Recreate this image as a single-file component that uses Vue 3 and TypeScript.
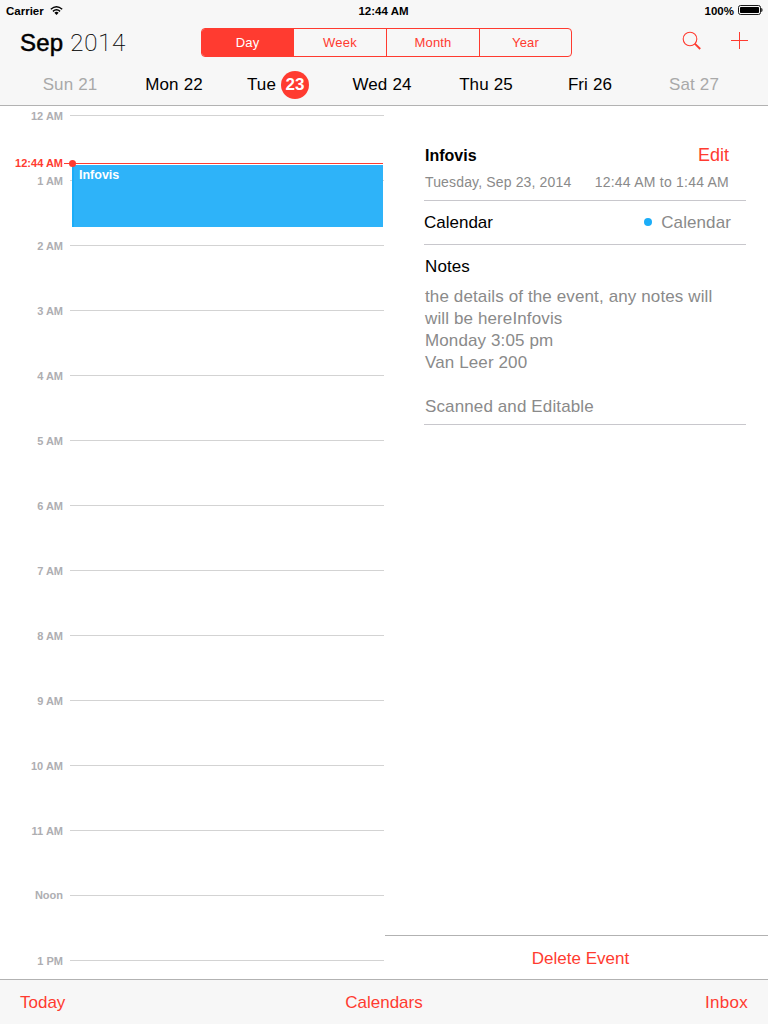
<script setup lang="ts">
interface Day { name: string; date: number; muted?: boolean; current?: boolean }

const days: Day[] = [
  { name: 'Sun', date: 21, muted: true },
  { name: 'Mon', date: 22 },
  { name: 'Tue', date: 23, current: true },
  { name: 'Wed', date: 24 },
  { name: 'Thu', date: 25 },
  { name: 'Fri', date: 26 },
  { name: 'Sat', date: 27, muted: true },
]
const views: string[] = ['Day', 'Week', 'Month', 'Year']
const hours: string[] = [
  '12 AM', '1 AM', '2 AM', '3 AM', '4 AM', '5 AM', '6 AM', '7 AM',
  '8 AM', '9 AM', '10 AM', '11 AM', 'Noon', '1 PM',
]
const notes: string[] = [
  'the details of the event, any notes will',
  'will be hereInfovis',
  'Monday 3:05 pm',
  'Van Leer 200',
  '',
  'Scanned and Editable',
]
</script>

<template>
  <div class="screen">
    <header class="header">
      <div class="status">
        <div class="carrier">
          <span>Carrier</span>
          <svg class="wifi" width="13" height="9" viewBox="0 0 13 9">
            <path d="M0.8 3.3Q6.5 -1.8 12.2 3.3M2.9 5.4Q6.5 2.3 10.1 5.4" fill="none" stroke="#000" stroke-width="1.4" />
            <path d="M4.4 6.7Q6.5 5 8.6 6.7L6.5 9Z" fill="#000" />
          </svg>
        </div>
        <span class="clock">12:44 AM</span>
        <div class="power">
          <span>100%</span>
          <svg class="battery" width="25" height="10" viewBox="0 0 25 10">
            <rect x="0.5" y="0.5" width="22" height="9" rx="2" fill="none" stroke="#000" stroke-width="0.9" />
            <rect x="2" y="2" width="19" height="6" rx="0.8" fill="#000" />
            <path d="M23.6 3.2Q25 5 23.6 6.8Z" fill="#000" stroke="#000" stroke-width="0.5" />
          </svg>
        </div>
      </div>
      <div class="toolbar">
        <h1 class="title"><span class="month">Sep</span><span class="year">2014</span></h1>
        <div class="segments">
          <button v-for="(view, i) in views" :key="view" :class="['segment', { active: i === 0 }]">{{ view }}</button>
        </div>
        <div class="actions">
          <svg width="20" height="20" viewBox="0 0 20 20" fill="none" stroke="#ff3b30">
            <circle cx="8" cy="9" r="6.8" stroke-width="1.1" />
            <path d="M12.8 13.6L18.2 19" stroke-width="1.9" />
          </svg>
          <svg width="18" height="18" viewBox="0 0 18 18" fill="none" stroke="#ff3b30">
            <path d="M0 9.5H17M8.5 1V18" stroke-width="1" />
          </svg>
        </div>
      </div>
      <nav class="days">
        <div v-for="day in days" :key="day.name" :class="['day', { muted: day.muted, current: day.current }]">
          <span>{{ day.name }}</span><span class="date">{{ day.date }}</span>
        </div>
      </nav>
    </header>

    <main class="main">
      <section class="timeline">
        <div v-for="hour in hours" :key="hour" class="hour">
          <span :class="['hour-label', { noon: hour === 'Noon' }]">{{ hour }}</span>
          <span class="hour-line"></span>
        </div>
        <div class="event">Infovis</div>
        <div class="now">
          <span class="now-label">12:44 AM</span>
          <span class="now-line"><span class="now-dot"></span></span>
        </div>
      </section>

      <section class="detail">
        <div class="detail-body">
          <div class="summary">
            <div class="row">
              <h2 class="event-title">Infovis</h2>
              <a class="edit">Edit</a>
            </div>
            <div class="row when">
              <span class="when-date">Tuesday, Sep 23, 2014</span>
              <span class="when-time">12:44 AM to 1:44 AM</span>
            </div>
          </div>
          <div class="calendar-row">
            <span>Calendar</span>
            <span class="calendar-value"><i class="dot"></i>Calendar</span>
          </div>
          <div class="notes">
            <h3 class="notes-title">Notes</h3>
            <p v-for="(line, i) in notes" :key="i" class="note">{{ line }}</p>
          </div>
        </div>
        <div class="delete"><a>Delete Event</a></div>
      </section>
    </main>

    <footer class="footer">
      <a>Today</a>
      <a>Calendars</a>
      <a>Inbox</a>
    </footer>
  </div>
</template>

<style>
body { margin: 0; }
</style>

<style scoped>
.screen {
  width: 768px;
  height: 1024px;
  overflow: hidden;
  display: flex;
  flex-direction: column;
  background: #fff;
  color: #000;
  font-family: "Liberation Sans", Arial, sans-serif;
  font-size: 17px;
}
* { box-sizing: border-box; }
h1, h2, h3, p { margin: 0; font-weight: 400; }
svg { display: block; }

.header {
  height: 106px;
  flex: none;
  display: flex;
  flex-direction: column;
  background: #f7f7f7;
  border-bottom: 1px solid #b2b2b2;
}
.status {
  height: 20px;
  display: grid;
  grid-template-columns: 1fr auto 1fr;
  align-items: center;
  padding: 2px 5px 0 6px;
  font-size: 11.5px;
  font-weight: 700;
  line-height: 18px;
}
.clock { margin-right: 2px; }
.carrier, .power { display: flex; align-items: center; }
.carrier { gap: 6px; }
.wifi, .battery { margin-top: -2px; }
.power { justify-content: flex-end; gap: 4px; }
.toolbar {
  height: 45px;
  display: grid;
  grid-template-columns: 181px 371px 1fr;
  align-items: center;
  padding: 0 19px 0 20px;
}
.title { display: flex; gap: 7px; font-size: 24px; line-height: 44px; }
.month { -webkit-text-stroke: 0.5px #000; letter-spacing: 0.2px; }
.year {
  font-family: Roboto, "Liberation Sans", sans-serif;
  font-weight: 100;
  letter-spacing: 0.8px;
  -webkit-text-stroke: 0.2px #000;
}
.segments {
  height: 29px;
  display: grid;
  grid-template-columns: 91px 93px 93px 92px;
  border: 1px solid #ff3b30;
  border-radius: 4px;
  overflow: hidden;
}
.segment {
  appearance: none;
  background: none;
  border: 0;
  border-left: 1px solid #ff3b30;
  padding: 0;
  color: #ff3b30;
  font: 13px "Liberation Sans", Arial, sans-serif;
  letter-spacing: 0.2px;
}
.segment.active { background: #ff3b30; color: #fff; border-left: 0; }
.actions { display: flex; justify-content: flex-end; align-items: center; gap: 29px; margin-top: -5px; }
.days {
  flex: 1;
  display: grid;
  grid-template-columns: repeat(7, 104px);
  padding-left: 18px;
  align-items: center;
}
.day {
  display: flex;
  justify-content: center;
  align-items: center;
  gap: 5px;
  line-height: 28px;
  letter-spacing: 0.1px;
}
.day.muted { color: #a9a9a9; }
.day.current .date {
  width: 28px;
  height: 28px;
  border-radius: 50%;
  background: #ff3b30;
  color: #fff;
  text-align: center;
  font-weight: 700;
}

.main { flex: 1; min-height: 0; display: flex; }
.timeline { position: relative; width: 384px; overflow: hidden; }
.hour { height: 65px; display: flex; align-items: flex-start; }
.hour-label, .now-label {
  width: 63px;
  text-align: right;
  font-size: 11px;
  font-weight: 700;
  line-height: 20px;
  color: #aeaeb2;
}
.hour-label.noon { line-height: 18px; }
.hour-line { flex: 1; height: 1px; margin: 9px 0 0 7px; background: #d3d3d3; }
.event {
  position: absolute;
  left: 72px;
  top: 58px;
  width: 311px;
  height: 63px;
  border-top: 1px solid #fff;
  border-left: 2px solid #1badf8;
  background: #2eb3f9;
  background-clip: padding-box;
  color: #fff;
  padding-left: 5px;
  font-size: 12.5px;
  font-weight: 700;
  line-height: 20px;
}
.now {
  position: absolute;
  left: 0;
  top: 47px;
  width: 383px;
  display: flex;
  align-items: center;
}
.now-label { color: #ff3b30; }
.now-line { position: relative; flex: 1; height: 1px; margin-left: 1px; background: #ff3b30; }
.now-dot {
  position: absolute;
  left: 5px;
  top: -3px;
  width: 7px;
  height: 7px;
  border-radius: 50%;
  background: #ff3b30;
}

.detail { flex: 1; display: flex; flex-direction: column; padding-left: 1px; }
.detail-body { flex: 1; padding: 36px 22px 0 39px; }
.summary { height: 59px; border-bottom: 1px solid #c8c7cc; padding: 0 17px 0 1px; }
.row { display: flex; justify-content: space-between; }
.event-title { font-size: 16px; font-weight: 700; line-height: 27px; }
.edit { font-size: 18px; line-height: 27px; color: #ff3b30; }
.when { font-size: 14px; line-height: 26px; color: #8a8a8a; white-space: nowrap; }
.when-date { letter-spacing: 0.15px; }
.when-time { letter-spacing: 0.23px; }
.calendar-row {
  height: 44px;
  display: flex;
  justify-content: space-between;
  align-items: center;
  padding-right: 15px;
  border-bottom: 1px solid #c8c7cc;
}
.calendar-value { display: flex; align-items: center; color: #8a8a8a; letter-spacing: 0.1px; }
.dot { width: 8px; height: 8px; border-radius: 50%; background: #1badf8; margin: -2px 9px 0 0; }
.notes { height: 180px; padding-left: 1px; border-bottom: 1px solid #c8c7cc; }
.notes-title { font-size: 17px; line-height: 22px; padding: 11px 0 8px; letter-spacing: 0.1px; }
.note { height: 22px; line-height: 22px; color: #8a8a8a; letter-spacing: 0.12px; white-space: nowrap; }
.delete {
  height: 44px;
  display: flex;
  justify-content: center;
  align-items: center;
  padding: 2px 0 0 8px;
  border-top: 1px solid #b2b2b2;
  color: #ff3b30;
}
.footer {
  height: 45px;
  flex: none;
  display: grid;
  grid-template-columns: 1fr auto 1fr;
  align-items: center;
  padding: 1px 20px 0;
  background: #f7f7f7;
  border-top: 1px solid #b2b2b2;
  color: #ff3b30;
}
.footer a:last-child { text-align: right; letter-spacing: 0.3px; }
</style>
